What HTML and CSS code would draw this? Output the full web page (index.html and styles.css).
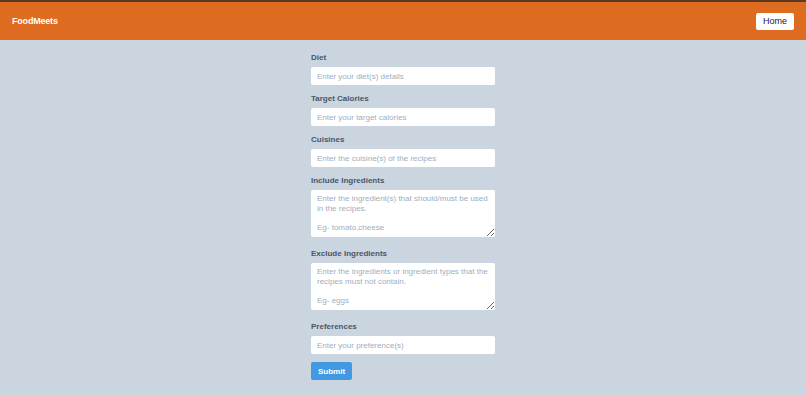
FILE: index.html
```html
<!DOCTYPE html>
<html lang="en">
<head>
  <meta charset="UTF-8">
  <meta name="viewport" content="width=device-width, initial-scale=1.0">
  <title>FoodMeets</title>
  <link rel="stylesheet" href="styles.css">
</head>
<body>
  <!-- Top Bar -->
  <nav class="navbar">
    <span class="brand">FoodMeets</span>
    <button class="home-btn">Home</button>
  </nav>

  <!-- Recipe Form -->
  <form class="recipe-form">
    <div class="field">
      <label>Diet</label>
      <input type="text" placeholder="Enter your diet(s) details">
    </div>
    <div class="field">
      <label>Target Calories</label>
      <input type="text" placeholder="Enter your target calories">
    </div>
    <div class="field">
      <label>Cuisines</label>
      <input type="text" placeholder="Enter the cuisine(s) of the recipes">
    </div>
    <div class="field">
      <label>Include Ingredients</label>
      <textarea placeholder="Enter the ingredient(s) that should/must be used in the recipes.&#10;&#10;Eg- tomato,cheese"></textarea>
    </div>
    <div class="field">
      <label>Exclude Ingredients</label>
      <textarea placeholder="Enter the ingredients or ingredient types that the recipes must not contain.&#10;&#10;Eg- eggs"></textarea>
    </div>
    <div class="field">
      <label>Preferences</label>
      <input type="text" placeholder="Enter your preference(s)">
    </div>
    <button type="button" class="submit-btn">Submit</button>
  </form>
</body>
</html>
```

FILE: styles.css
```css
/* Global Styles */
body {
  margin: 0;
  padding: 0;
  font-family: 'Liberation Sans', Arial, sans-serif;
  background-color: #cbd5e0;
  color: #4a5568;
  height: 396px;
  overflow: hidden;
}

/* Navbar */
.navbar {
  display: flex;
  justify-content: space-between;
  align-items: center;
  height: 38px;
  padding: 0 12px;
  background-color: #dd6b20;
  border-top: 2px solid #5a3a22;
}

.brand {
  color: #fff;
  font-weight: bold;
  font-size: 9px;
  letter-spacing: -0.2px;
}

.home-btn {
  background-color: #fff;
  color: #1a202c;
  border: none;
  border-radius: 2px;
  padding: 0 7px;
  height: 17px;
  font-family: inherit;
  font-size: 9px;
}

/* Form */
.recipe-form {
  width: 184px;
  margin: 0 auto;
  padding-top: 12px;
}

.field {
  margin-bottom: 8px;
}

.field label {
  display: block;
  font-size: 8px;
  font-weight: bold;
  line-height: 10px;
  padding-top: 1px;
  margin-bottom: 4px;
}

.field input,
.field textarea {
  display: block;
  box-sizing: border-box;
  width: 184px;
  border: none;
  border-radius: 2px;
  background-color: #fff;
  font-family: inherit;
  font-size: 8px;
  color: #4a5568;
  padding: 0 6px;
  outline: none;
}

.field input {
  height: 18px;
}

.field textarea {
  height: 47px;
  padding-top: 4px;
  line-height: 9.7px;
  resize: vertical;
  margin-bottom: 11px;
}

.field input::placeholder,
.field textarea::placeholder {
  color: #a0aec0;
}

.submit-btn {
  display: block;
  background-color: #4299e1;
  color: #fff;
  font-family: inherit;
  font-weight: bold;
  font-size: 8px;
  border: none;
  border-radius: 2px;
  width: 41px;
  height: 18px;
  padding: 0;
}
```
